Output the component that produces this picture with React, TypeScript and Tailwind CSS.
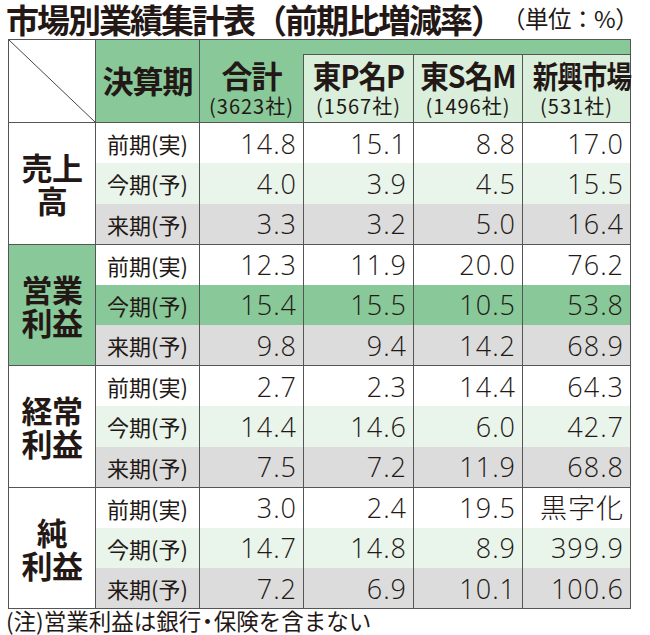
import React from "react";

type Section = {
  label: string[];
  green: boolean;
  rows: string[][];
};

const sections: Section[] = [
  {
    label: ["売上", "高"],
    green: false,
    rows: [
      ["前期(実)", "14.8", "15.1", "8.8", "17.0"],
      ["今期(予)", "4.0", "3.9", "4.5", "15.5"],
      ["来期(予)", "3.3", "3.2", "5.0", "16.4"],
    ],
  },
  {
    label: ["営業", "利益"],
    green: true,
    rows: [
      ["前期(実)", "12.3", "11.9", "20.0", "76.2"],
      ["今期(予)", "15.4", "15.5", "10.5", "53.8"],
      ["来期(予)", "9.8", "9.4", "14.2", "68.9"],
    ],
  },
  {
    label: ["経常", "利益"],
    green: false,
    rows: [
      ["前期(実)", "2.7", "2.3", "14.4", "64.3"],
      ["今期(予)", "14.4", "14.6", "6.0", "42.7"],
      ["来期(予)", "7.5", "7.2", "11.9", "68.8"],
    ],
  },
  {
    label: ["純", "利益"],
    green: false,
    rows: [
      ["前期(実)", "3.0", "2.4", "19.5", "黒字化"],
      ["今期(予)", "14.7", "14.8", "8.9", "399.9"],
      ["来期(予)", "7.2", "6.9", "10.1", "100.6"],
    ],
  },
];

const font = { fontFamily: '"Noto Sans CJK JP", "Noto Sans", sans-serif' };
const numFont = { fontFamily: '"Open Sans", "Noto Sans CJK JP", sans-serif' };

function rowBg(sectionGreen: boolean, i: number) {
  if (i === 0) return "bg-white";
  if (i === 1) return sectionGreen ? "bg-[#89c899]" : "bg-[#e9f4eb]";
  return "bg-[#dcdcdc]";
}

const subHeads = [
  { a: "東P名P", b: "(1567社)", cls: "scale-x-[0.92]" },
  { a: "東S名M", b: "(1496社)", cls: "scale-x-[0.92]" },
  { a: "新興市場", b: "(531社)", cls: "scale-x-[0.82]" },
];

export default function App() {
  return (
    <div className="w-[650px] h-[635px] bg-white text-[#231815] overflow-hidden" style={font}>
      <div className="flex items-center h-[39px] pl-[6px] pr-[20px]">
        <div className="shrink-0 text-[33px] font-bold leading-[39px] tracking-[-2px] whitespace-nowrap">
          市場別業績集計表（前期比増減率）
        </div>
        <div className="ml-auto shrink-0 text-[23.5px] leading-[30px] -mt-[4px] tracking-[-0.5px] whitespace-nowrap">
          （単位：%）
        </div>
      </div>
      <table className="ml-[8px] w-[622px] table-fixed border-collapse">
        <colgroup>
          <col className="w-[87px]" />
          <col className="w-[104px]" />
          <col className="w-[104px]" />
          <col className="w-[110px]" />
          <col className="w-[109px]" />
          <col className="w-[108px]" />
        </colgroup>
        <thead>
          <tr className="h-[15px]">
            <td rowSpan={2} className="relative border border-[#555] bg-white p-0">
              <svg
                className="absolute inset-0 w-full h-full"
                viewBox="0 0 100 100"
                preserveAspectRatio="none"
              >
                <line x1="0" y1="0" x2="100" y2="100" stroke="#444" strokeWidth="1" vectorEffect="non-scaling-stroke" />
              </svg>
            </td>
            <td rowSpan={2} className="border border-[#555] bg-[#89c899] p-0 text-center align-middle">
              <span className="text-[31px] font-bold leading-none tracking-[-1px] whitespace-nowrap">決算期</span>
            </td>
            <td colSpan={4} className="border border-[#555] border-b-0 bg-[#89c899] p-0"></td>
          </tr>
          <tr className="h-[68px]">
            <td className="border border-[#555] border-t-0 bg-[#89c899] p-0 text-center align-top">
              <div className="text-[31px] font-bold leading-none mt-[4px] tracking-[-1px] whitespace-nowrap">合計</div>
              <div className="text-[20px] leading-none mt-[6px] tracking-[1px] whitespace-nowrap">(3623社)</div>
            </td>
            {subHeads.map((h) => (
              <td key={h.a} className="border border-[#555] bg-[#d9efdc] p-0 text-center align-top">
                <div className={`text-[31px] font-bold leading-none mt-[4px] tracking-[-1px] whitespace-nowrap ${h.cls}`}>
                  {h.a}
                </div>
                <div className="text-[20px] leading-none mt-[6px] tracking-[1px] whitespace-nowrap">{h.b}</div>
              </td>
            ))}
          </tr>
        </thead>
        <tbody>
          {sections.map((s) =>
            s.rows.map((r, i) => {
              const bg = rowBg(s.green, i);
              const yb = i === 0 ? "border-t" : "border-t-0";
              const bb = i === 2 ? "border-b" : "border-b-0";
              return (
                <tr key={s.label.join("") + i} className="h-[40.5px]">
                  {i === 0 && (
                    <td
                      rowSpan={3}
                      className={`border border-[#555] p-0 text-center align-middle ${s.green ? "bg-[#89c899]" : "bg-white"}`}
                    >
                      {s.label.map((l) => (
                        <div key={l} className="text-[31px] font-bold leading-[33px] tracking-[-0.5px] whitespace-nowrap">
                          {l}
                        </div>
                      ))}
                    </td>
                  )}
                  <td className={`border-x border-[#555] ${yb} ${bb} ${bg} p-0 text-center text-[22px] leading-none whitespace-nowrap`}>
                    {r[0]}
                  </td>
                  {r.slice(1).map((v, j) => (
                    <td
                      key={j}
                      style={numFont}
                      className={`border-x border-[#555] ${yb} ${bb} ${bg} p-0 pr-[6px] text-right text-[27px] font-light leading-none tracking-[1px] whitespace-nowrap`}
                    >
                      {v}
                    </td>
                  ))}
                </tr>
              );
            })
          )}
        </tbody>
      </table>
      <div className="pl-[6px] -mt-[2px] text-[22.5px] leading-[26px] whitespace-nowrap">
        (注)営業利益は銀行<span className="-mx-[5px]">・</span>保険を含まない
      </div>
    </div>
  );
}
